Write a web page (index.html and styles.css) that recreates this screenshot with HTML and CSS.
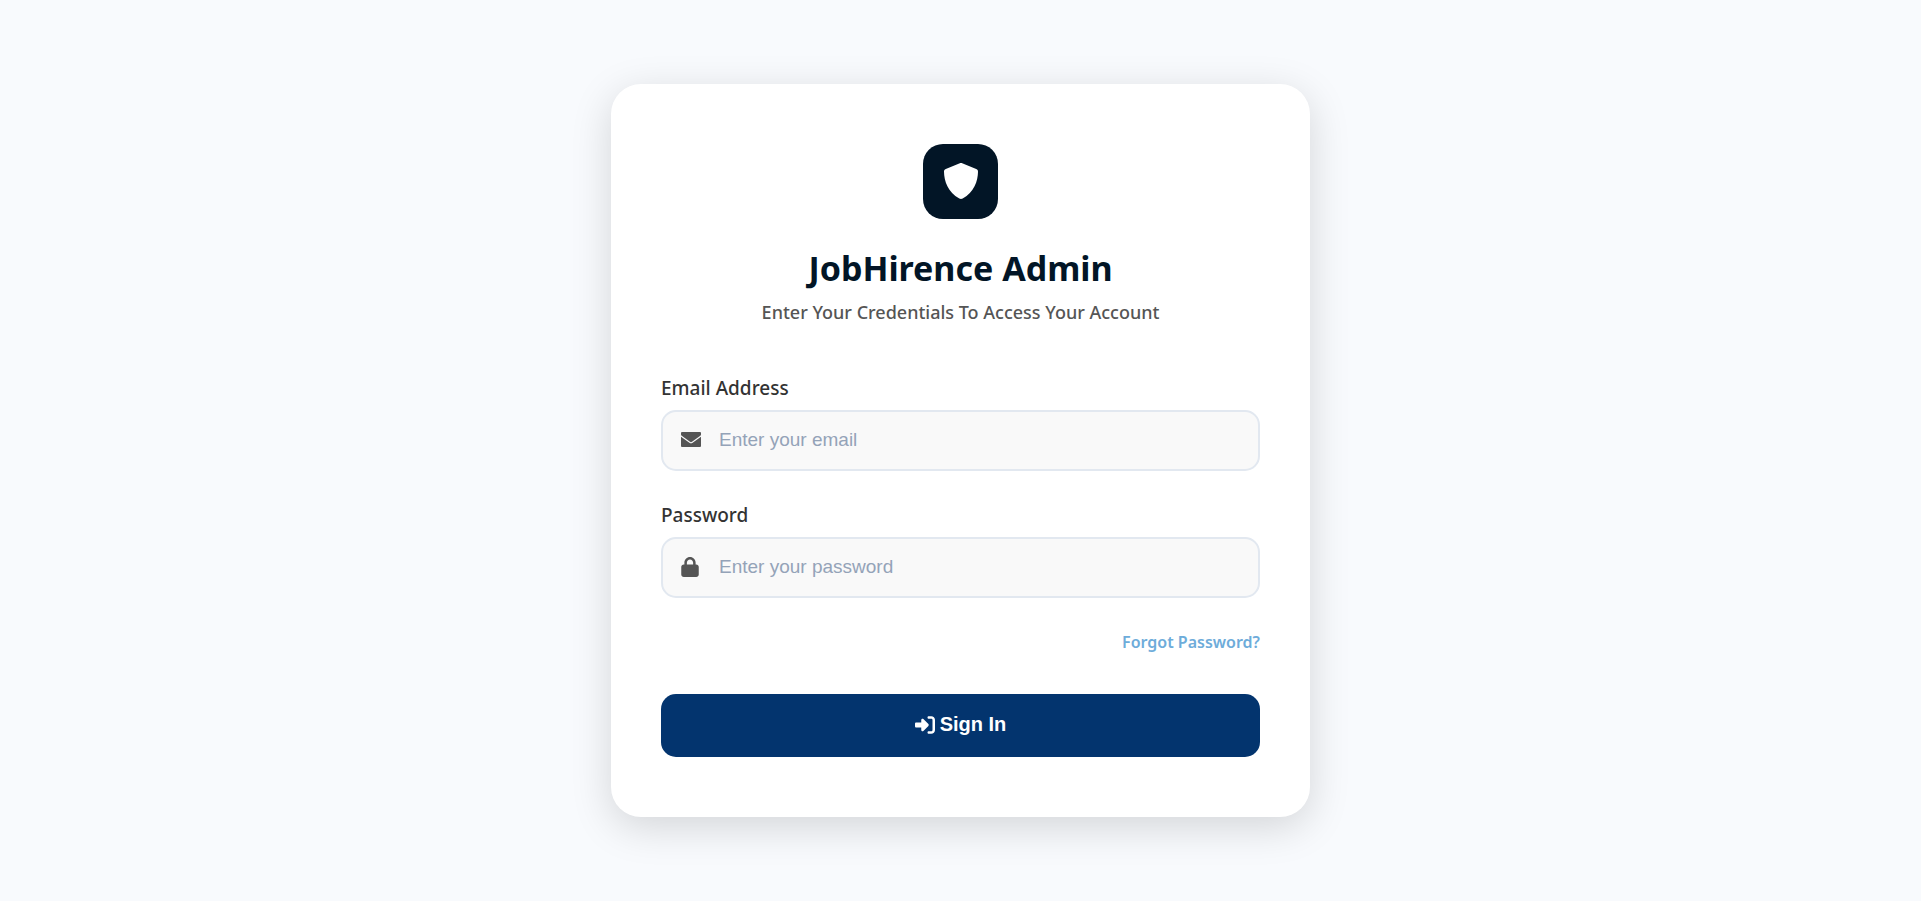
FILE: index.html
```html
<!DOCTYPE html>
<html lang="en">
<head>
<meta charset="utf-8">
<meta name="viewport" content="width=device-width, initial-scale=1">
<title>JobHirence Admin</title>
<link rel="stylesheet" href="styles.css">
</head>
<body>
<main class="card">
  <header class="header">
    <div class="logo">
      <svg class="logo-icon" viewBox="0 0 36 36" aria-hidden="true"><path fill="currentColor" d="M18 0c.4 0 .8.1 1.200.3L33.200 6c1.300.5 1.800 1.400 1.800 2.800C34.900 18 31 29.500 19.700 35.500c-1.100.6-2.300.6-3.400 0C5 29.500 1.100 18 1 8.800C1 7.400 1.500 6.500 2.800 6L16.800.3C17.200.1 17.600 0 18 0z"/></svg>
    </div>
    <h1 class="title">JobHirence Admin</h1>
    <p class="subtitle">Enter Your Credentials To Access Your Account</p>
  </header>
  <form class="form">
    <div class="field">
      <label class="label" for="email">Email Address</label>
      <div class="control">
        <svg class="field-icon" viewBox="0 0 20 20" aria-hidden="true"><path fill="currentColor" d="M1 2h18a1 1 0 0 1 1 1v1.500c0 .6-.3 1-.7 1.300L11 11.800c-.6.5-1.400.5-2 0L.7 5.800C.3 5.500 0 5.100 0 4.500V3a1 1 0 0 1 1-1zM0 6.700l8.400 6.100c1 .7 2.200.7 3.200 0L20 6.700V16a1 1 0 0 1-1 1H1a1 1 0 0 1-1-1z"/></svg>
        <input class="input" id="email" type="email" placeholder="Enter your email">
      </div>
    </div>
    <div class="field">
      <label class="label" for="password">Password</label>
      <div class="control">
        <svg class="field-icon field-icon-lock" viewBox="0 0 448 512" aria-hidden="true"><path fill="currentColor" d="M144 144v48H304V144c0-44.200-35.800-80-80-80s-80 35.800-80 80zM80 192V144C80 64.500 144.500 0 224 0s144 64.500 144 144v48h16c35.300 0 64 28.700 64 64V448c0 35.300-28.700 64-64 64H64c-35.300 0-64-28.700-64-64V256c0-35.300 28.700-64 64-64H80z"/></svg>
        <input class="input" id="password" type="password" placeholder="Enter your password">
      </div>
    </div>
    <a class="forgot" href="#">Forgot Password?</a>
    <button class="submit" type="submit">
      <svg class="submit-icon" viewBox="0 0 512 512" aria-hidden="true"><path fill="currentColor" d="M352 96l64 0c17.700 0 32 14.300 32 32l0 256c0 17.700-14.300 32-32 32l-64 0c-17.700 0-32 14.300-32 32s14.300 32 32 32l64 0c53 0 96-43 96-96l0-256c0-53-43-96-96-96l-64 0c-17.700 0-32 14.300-32 32s14.300 32 32 32zm-9.400 182.600c12.500-12.500 12.500-32.800 0-45.300l-128-128c-9.200-9.200-22.900-11.900-34.900-6.900S160 115.100 160 128l0 64-128 0c-17.700 0-32 14.300-32 32l0 64c0 17.700 14.300 32 32 32l128 0 0 64c0 12.900 7.800 24.600 19.800 29.600s25.700 2.200 34.900-6.900l128-128z"/></svg>
      <span>Sign In</span>
    </button>
  </form>
</main>
</body>
</html>
```
FILE: styles.css
```css
*, *::before, *::after { box-sizing: border-box; }

body {
  margin: 0;
  min-height: 100vh;
  display: flex;
  align-items: center;
  justify-content: center;
  background: #f8fafd;
  font-family: "Segoe UI", "Noto Sans", sans-serif;
}

.card {
  width: 100%;
  max-width: 699px;
  padding: 60px 50px;
  border-radius: 30px;
  background: #fff;
  box-shadow: 0 10px 40px rgba(0, 0, 0, 0.15);
}

.header {
  display: flex;
  flex-direction: column;
  align-items: center;
  margin-bottom: 52px;
  text-align: center;
}

.logo {
  display: flex;
  justify-content: center;
  width: 75px;
  height: 75px;
  margin-bottom: 25px;
  padding-top: 19px;
  border-radius: 20px;
  background: #021526;
  color: #fff;
}

.logo-icon { width: 36px; height: 36px; }

.title {
  margin: 0 0 8px;
  color: #021526;
  font-size: 34px;
  font-weight: 700;
  line-height: 48px;
}

.subtitle {
  margin: 0;
  color: #555;
  font-size: 18px;
  font-weight: 500;
  line-height: 24px;
}

.form { display: flex; flex-direction: column; }

.field {
  display: flex;
  flex-direction: column;
  gap: 10px;
  margin-bottom: 32px;
}

.label {
  color: #333;
  font-size: 19px;
  font-weight: 500;
  line-height: 24px;
}

.control {
  display: flex;
  align-items: center;
  height: 61px;
  padding: 0 0 2px 18px;
  border: 2px solid #e2e8f0;
  border-radius: 15px;
  background: #f9f9f9;
}

.control:focus-within { border-color: #6eacda; }

.field-icon { flex: none; width: 20px; height: 20px; color: #555; }
.field-icon-lock { width: 18px; margin-right: 2px; }

.input {
  flex: 1;
  min-width: 0;
  height: 100%;
  padding: 0 18px;
  border: 0;
  outline: 0;
  background: transparent;
  color: #333;
  font-family: Arial, "Liberation Sans", sans-serif;
  font-size: 19px;
}

.input::placeholder { color: #94a3b8; }

.forgot {
  align-self: flex-end;
  margin-bottom: 40px;
  color: #6eacda;
  font-size: 16px;
  font-weight: 600;
  line-height: 24px;
  text-decoration: none;
}

.submit {
  display: flex;
  align-items: center;
  justify-content: center;
  gap: 5px;
  height: 63px;
  padding: 0 6px 2px;
  border: 0;
  border-radius: 15px;
  background: #03346e;
  color: #fff;
  font-family: Arial, "Liberation Sans", sans-serif;
  font-size: 20px;
  font-weight: 700;
  cursor: pointer;
}

.submit-icon { width: 20px; height: 20px; }
```
